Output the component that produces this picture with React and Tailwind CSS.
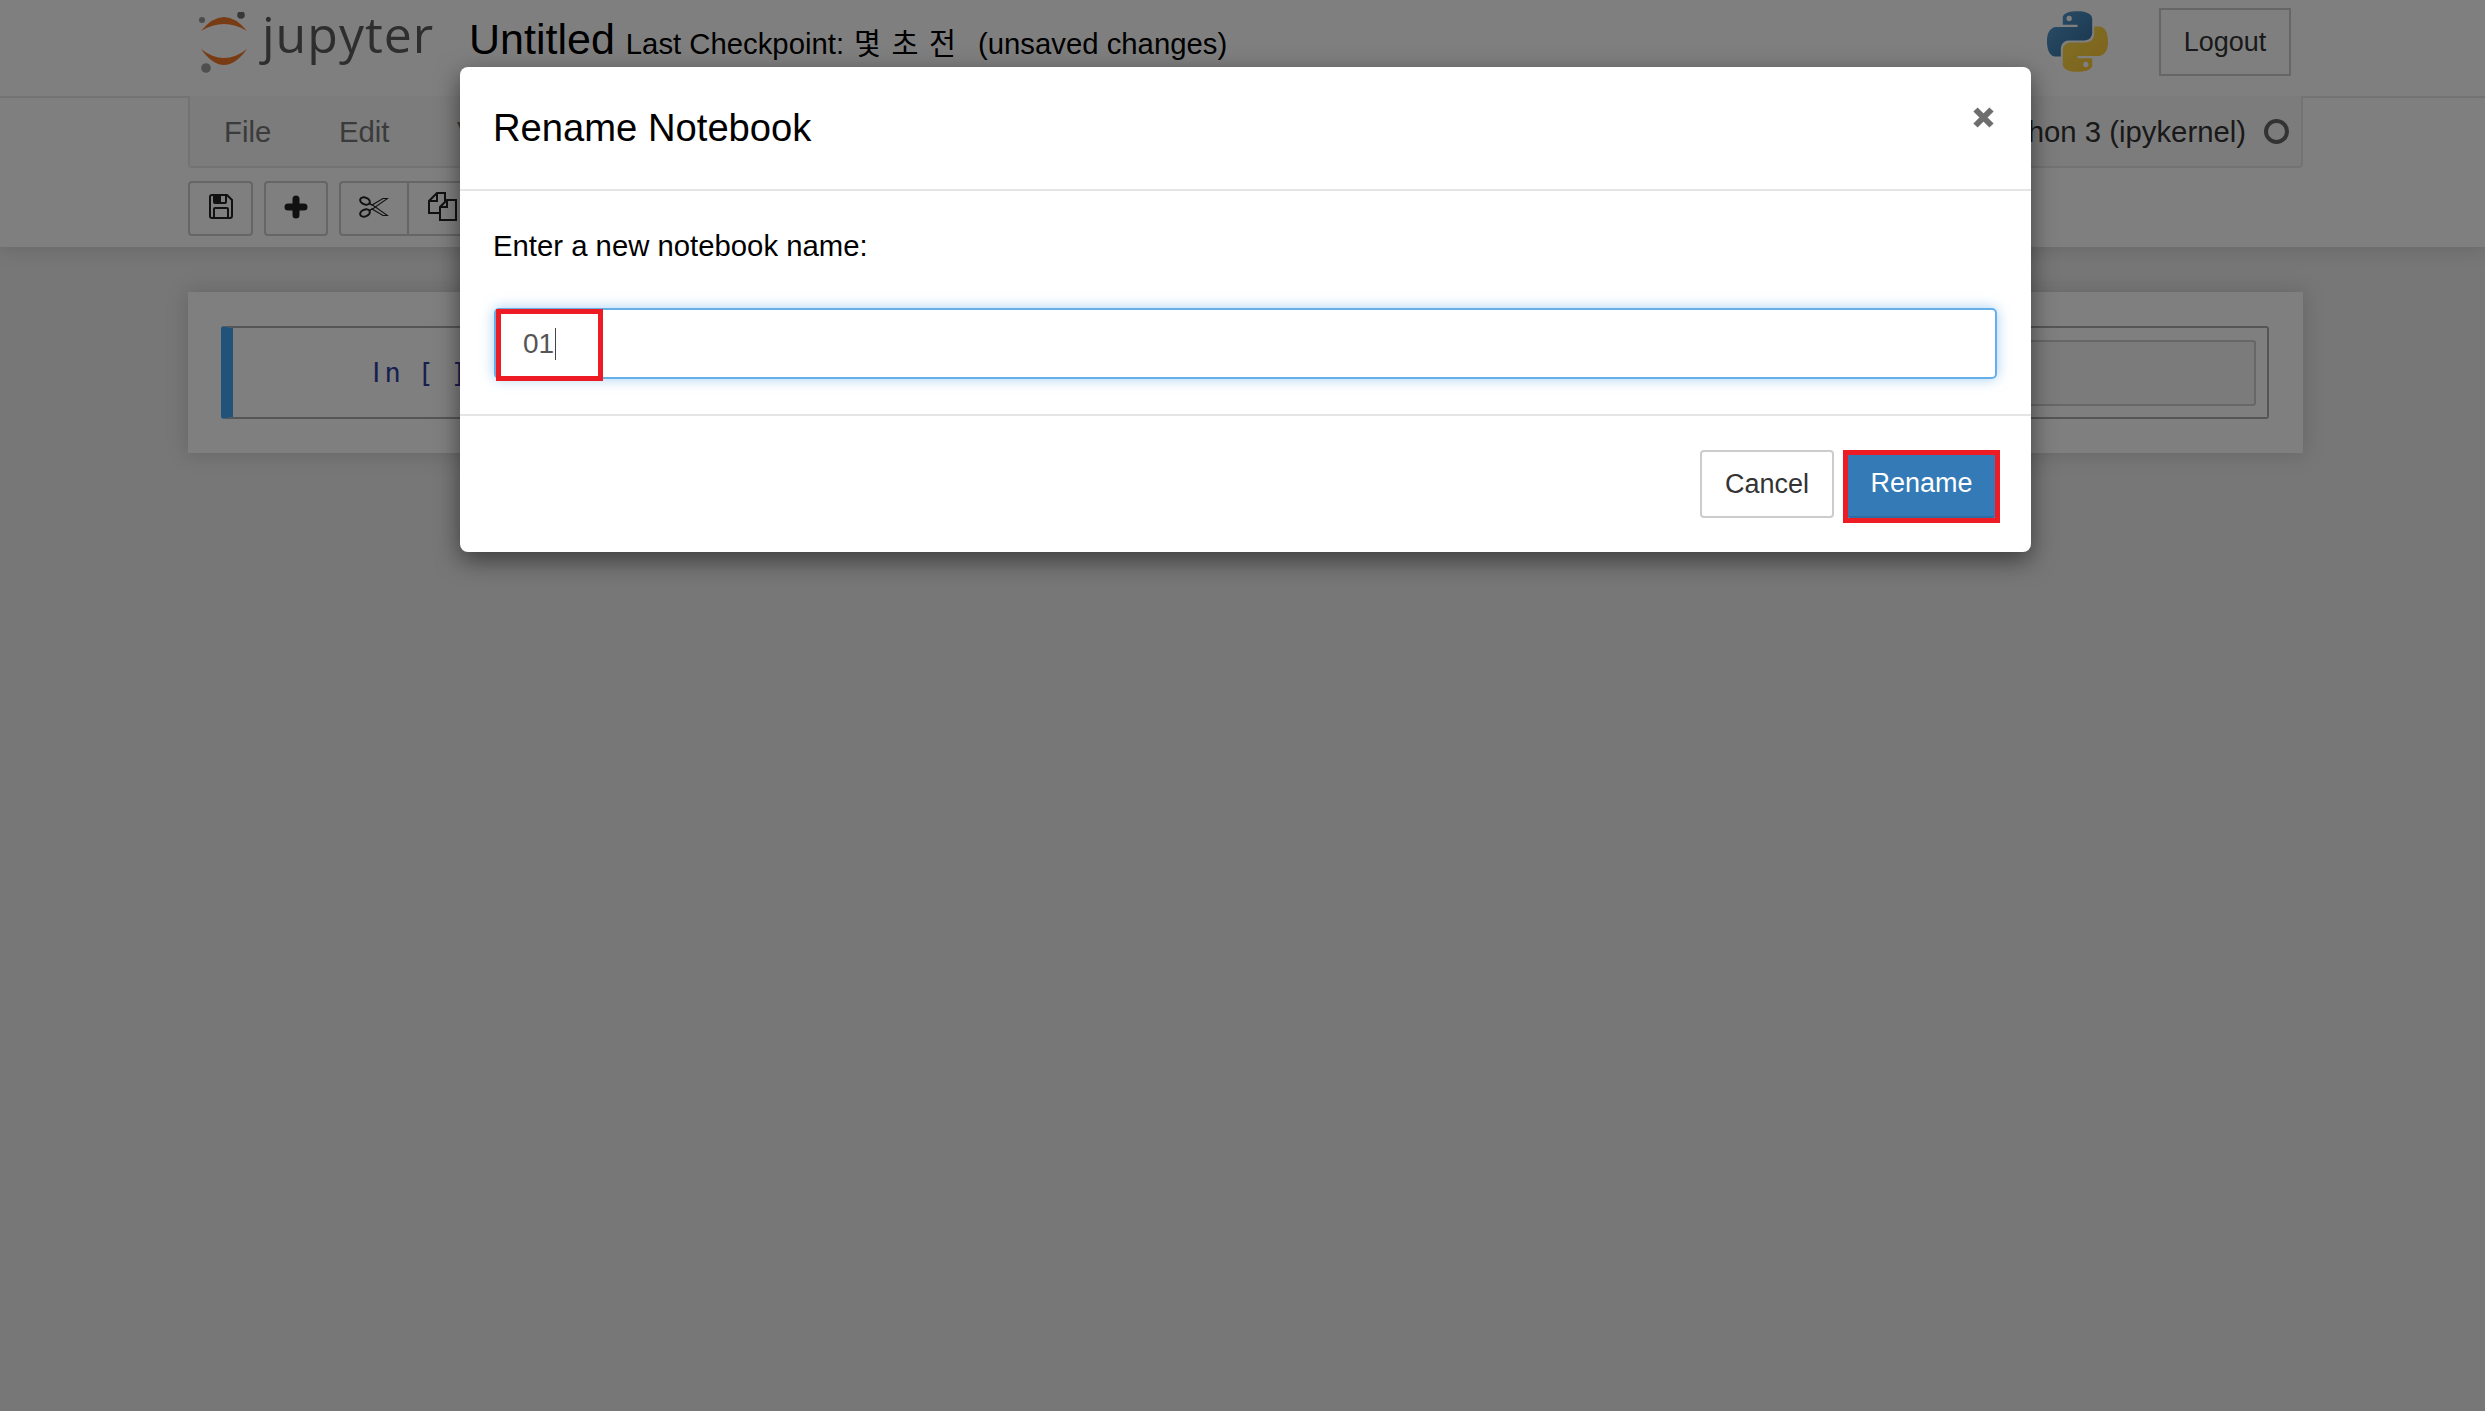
import React from 'react';

const sans = "font-['Liberation_Sans',Arial,sans-serif]";

function JupyterMark() {
  return (
    <svg width="52" height="62" viewBox="0 0 52 62" className="shrink-0">
      <path d="M3 19Q26 -9 49 19Q26 5 3 19Z" fill="#f37726" />
      <path d="M3 37Q26 69 49 37Q26 55 3 37Z" fill="#f37726" />
      <circle cx="4" cy="8" r="3" fill="#989798" />
      <circle cx="43" cy="3" r="3.8" fill="#6f7070" />
      <circle cx="8" cy="56" r="4.8" fill="#9e9e9e" />
    </svg>
  );
}

function SaveIcon() {
  return (
    <svg width="24" height="25" viewBox="0 0 24 25" fill="none" stroke="#222" strokeWidth="2">
      <path d="M1 3a2 2 0 0 1 2-2h15l5 5v16a2 2 0 0 1-2 2H3a2 2 0 0 1-2-2Z" />
      <path d="M5 1v7a1 1 0 0 0 1 1h10a1 1 0 0 0 1-1V1" />
      <path d="M5 24v-9a1 1 0 0 1 1-1h12a1 1 0 0 1 1 1v9" />
      <rect x="5" y="1" width="7" height="8" fill="#222" stroke="none" />
    </svg>
  );
}

function PlusIcon() {
  return (
    <svg width="24" height="24" viewBox="0 0 24 24" fill="none" stroke="#222" strokeWidth="7" strokeLinecap="round" strokeLinejoin="round">
      <path d="M12 4v16M4 12h16" />
    </svg>
  );
}

function ScissorsIcon() {
  return (
    <svg width="30" height="22" viewBox="0 0 30 22" fill="none" stroke="#222">
      <ellipse cx="6" cy="5" rx="5" ry="3.4" transform="rotate(22 6 5)" strokeWidth="2" />
      <ellipse cx="6" cy="17" rx="5" ry="3.4" transform="rotate(-22 6 17)" strokeWidth="2" />
      <path d="M10.5 7.5 15 10 28.5 19.5 24 19.5 13 13 10.5 14.5" strokeWidth="1.1" />
      <path d="M10.5 14.5 15 12 28.5 2.5 24 2.5 13 9 10.5 7.5" strokeWidth="1.1" />
    </svg>
  );
}

function CopyIcon() {
  return (
    <svg width="29" height="29" viewBox="0 0 29 29" fill="none" stroke="#222" strokeWidth="2">
      <path d="M11 21H1V9l8-8h8v8" />
      <path d="M9 1v8H1" />
      <path d="M12 15l7-7h9v20H12Z" fill="#fff" />
      <path d="M19 8v7h-7" />
    </svg>
  );
}

function PythonLogo() {
  return (
    <svg width="61" height="63" viewBox="0 0 110.6 110">
      <defs>
        <linearGradient id="pyBlue" x1="0" y1="0" x2="1" y2="1">
          <stop offset="0" stopColor="#5a9fd4" />
          <stop offset="1" stopColor="#306998" />
        </linearGradient>
        <linearGradient id="pyYellow" x1="0" y1="0" x2="1" y2="1">
          <stop offset="0" stopColor="#ffe052" />
          <stop offset="1" stopColor="#ffc331" />
        </linearGradient>
      </defs>
      <path fill="url(#pyBlue)" d="M54.9 0C26.9 0 28.6 12.2 28.6 12.2v12.6h26.7v3.8H18S0 26.5 0 54.8s15.7 27.3 15.7 27.3h9.4V69s-.5-15.7 15.4-15.7h26.6s14.9.2 14.9-14.4V14.8S84.3 0 54.9 0ZM40.2 8.5a4.8 4.8 0 1 1 0 9.6 4.8 4.8 0 0 1 0-9.6Z" />
      <path fill="url(#pyYellow)" d="M55.7 110c28 0 26.3-12.2 26.3-12.2V85.2H55.3v-3.8h37.3s18 2 18-26.2-15.7-27.3-15.7-27.3h-9.4V41s.5 15.7-15.4 15.7H43.5s-14.9-.2-14.9 14.4v24.1S26.3 110 55.7 110Zm14.7-8.5a4.8 4.8 0 1 1 0-9.6 4.8 4.8 0 0 1 0 9.6Z" />
    </svg>
  );
}

function ToolButton({ className, children }) {
  return (
    <button type="button" className={`flex h-[55px] items-center justify-center border-2 border-[#ccc] bg-white pb-[4px] ${className}`}>
      {children}
    </button>
  );
}

function Header() {
  return (
    <header className="h-[247px] shrink-0 bg-white shadow-[0_0_19px_2px_rgba(87,87,87,0.2)]">
      <div className="flex h-[98px] border-b-2 border-[#e7e7e7] pl-[188px] pr-[182px]">
        <div className="flex w-[281px] items-start pl-[10px] pt-[12px]">
          <JupyterMark />
          <span className="ml-[12px] -mt-[8px] font-['Open_Sans',sans-serif] text-[50px] leading-[60px] tracking-[1px] text-[#5c5c5c]">jupyter</span>
        </div>
        <div className="flex items-baseline pt-[9px] text-black">
          <span className="text-[43px] leading-[60px]">Untitled</span>
          <span className="ml-[11px] text-[29.3px]">Last Checkpoint:</span>
          <span className="ml-[10px] font-['Noto_Sans_CJK_KR',sans-serif] text-[29.3px] tracking-[2px]">몇 초 전</span>
          <span className="ml-[20px] text-[29.3px]">(unsaved changes)</span>
        </div>
        <div className="ml-auto mr-[12px] flex items-start gap-[51px] pt-[8px]">
          <div className="pt-[2px]"><PythonLogo /></div>
          <button type="button" className="h-[68px] w-[132px] border-2 border-[#ccc] text-[27px] text-[#333]">Logout</button>
        </div>
      </div>

      <div className="ml-[188px] mr-[182px] -mt-[2px] flex h-[72px] items-center rounded-b-[4px] border-2 border-t-0 border-[#e7e7e7] bg-[#f8f8f8] pl-[34px] pr-[12px] pt-[1px] text-[29.3px]">
        <span className="w-[115px] text-[#777]">File</span>
        <span className="w-[118px] text-[#777]">Edit</span>
        <span className="text-[#777]">View</span>
        <span className="ml-auto text-[#333]">Python 3 (ipykernel)</span>
        <span className="ml-[18px] h-[25px] w-[25px] rounded-full border-[4px] border-[#666]"></span>
      </div>

      <div className="ml-[188px] mt-[13px] flex gap-[11px]">
        <ToolButton className="w-[65px] rounded-[4px]"><SaveIcon /></ToolButton>
        <ToolButton className="w-[64px] rounded-[4px]"><PlusIcon /></ToolButton>
        <div className="flex">
          <ToolButton className="w-[70px] rounded-l-[4px]"><ScissorsIcon /></ToolButton>
          <ToolButton className="-ml-[2px] w-[71px]"><CopyIcon /></ToolButton>
        </div>
      </div>
    </header>
  );
}

function Prompt() {
  return (
    <div className="ml-[135px] flex w-[123px] pt-[2px] font-['DejaVu_Sans_Mono',monospace] text-[27px] text-[#303f9f]">
      <span className="w-[16.5px] text-center font-['DejaVu_Sans',sans-serif]">I</span>
      <span className="w-[16.5px] text-center">n</span>
      <span className="w-[16.5px]"></span>
      <span className="w-[16.5px] text-center">[</span>
      <span className="w-[16.5px]"></span>
      <span className="w-[16.5px] text-center">]</span>
      <span className="w-[16.5px] text-center">:</span>
    </div>
  );
}

function Notebook() {
  return (
    <div className="ml-[188px] mt-[45px] h-[161px] w-[2115px] bg-white px-[33px] pt-[34px] shadow-[0_0_19px_2px_rgba(87,87,87,0.2)]">
      <div className="flex h-[93px] w-[2048px] items-center rounded-[3px] border-2 border-l-[12px] border-[#ababab] border-l-[#42a5f5] pr-[11px]">
        <Prompt />
        <div className="h-[66px] flex-1 rounded-[3px] border-2 border-[#cfcfcf] bg-[#f7f7f7]"></div>
      </div>
    </div>
  );
}

function RenameModal() {
  return (
    <div className="absolute left-[460px] top-[67px] flex h-[485px] w-[1571px] flex-col rounded-[8px] bg-white shadow-[0_8px_24px_rgba(0,0,0,0.5)]">
      <div className="flex h-[124px] shrink-0 items-center justify-between border-b-2 border-[#e5e5e5] pl-[33px] pr-[36px]">
        <h4 className="text-[38.2px] text-black">Rename Notebook</h4>
        <svg width="23" height="23" viewBox="0 0 23 23" stroke="#6e6e6e" strokeWidth="6" className="mb-[22px]">
          <path d="M3.5 3.5l16 16M19.5 3.5l-16 16" />
        </svg>
      </div>

      <div className="h-[223px] shrink-0 px-[34px] pt-[34px]">
        <p className="-ml-[1px] text-[29.3px] leading-[41px] text-black">Enter a new notebook name:</p>
        <div className="relative mt-[42px] flex h-[71px] items-center rounded-[5px] border-2 border-[#66afe9] pl-[27px] pt-[1px] text-[28px] text-[#555] shadow-[0_0_13px_rgba(102,175,233,0.6)]">
          <span>01</span>
          <span className="ml-[1px] h-[32px] w-[1px] bg-[#444]"></span>
          <span className="absolute left-0 -top-[1px] h-[72px] w-[107px] border-[5px] border-[#ed1c24]"></span>
        </div>
      </div>

      <div className="flex flex-1 items-start justify-end gap-[12px] border-t-2 border-[#e5e5e5] pr-[34px] pt-[34px] text-[27px]">
        <button type="button" className="h-[68px] w-[134px] rounded-[4px] border-2 border-[#ccc] bg-white text-[#333]">Cancel</button>
        <div className="relative">
          <button type="button" className="h-[68px] w-[151px] rounded-[4px] border-b-2 border-[#2e6da4] bg-[#337ab7] text-white">Rename</button>
          <span className="absolute -left-[3px] top-0 h-[73px] w-[157px] border-[5px] border-[#ed1c24]"></span>
        </div>
      </div>
    </div>
  );
}

export default function App() {
  return (
    <div className={`relative h-screen w-full overflow-hidden bg-[#eee] ${sans}`}>
      <Header />
      <Notebook />
      {/* backdrop + dialog */}
      <div className="absolute inset-0 bg-black/50"></div>
      <RenameModal />
    </div>
  );
}
